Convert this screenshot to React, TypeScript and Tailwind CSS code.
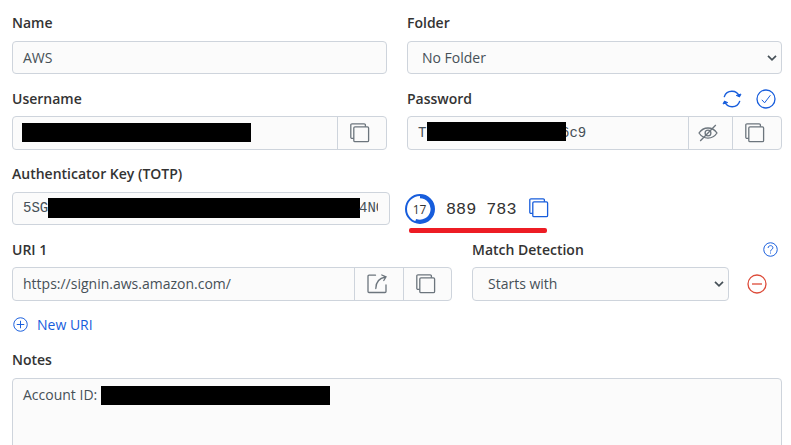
import type { ReactNode } from "react";

const label = "flex h-[21px] items-center text-sm font-semibold text-[#333333]";
const box = "flex rounded-[4px] border border-[#ced4dc] bg-[#fbfbfb] text-sm text-[#465057]";
const mono = "font-['Liberation_Mono',monospace]";

function CopyIcon({ className = "" }: { className?: string }) {
  return (
    <svg width="20" height="20" viewBox="0 0 20 20" fill="none" stroke="currentColor" strokeWidth="1.3" className={`shrink-0 ${className}`}>
      <rect x="3.8" y="3.8" width="14.8" height="14.8" rx="1.2" />
      <path d="M3.8 15.4H2A1.2 1.2 0 0 1 .8 14.2V2A1.2 1.2 0 0 1 2 .8H14.2A1.2 1.2 0 0 1 15.4 2V3.8" />
    </svg>
  );
}

function EyeSlashIcon() {
  return (
    <svg width="20" height="18" viewBox="0 0 20 18" fill="none" stroke="currentColor" strokeWidth="1.3" className="shrink-0">
      <path d="M1 9C5.5 2.3 14.5 2.3 19 9C14.5 15.7 5.5 15.7 1 9Z" />
      <circle cx="10" cy="9" r="2.9" />
      <path d="M2.2 17L17.8 1" />
    </svg>
  );
}

function ShareIcon() {
  return (
    <svg width="20" height="20" viewBox="0 0 20 20" fill="none" stroke="currentColor" strokeWidth="1.3" strokeLinecap="round" className="shrink-0">
      <path d="M8.5 1.2H2A1 1 0 0 0 1 2.2V17.5A1 1 0 0 0 2 18.5H18A1 1 0 0 0 19 17.5V11" />
      <path d="M8.8 14.5C8.8 8.5 12 4.2 18.5 3M14.8 1L19 2.8L16.8 6.5" />
    </svg>
  );
}

function RefreshIcon() {
  return (
    <svg width="20" height="18" viewBox="0 0 20 18" fill="none" stroke="currentColor" strokeWidth="1.3" strokeLinecap="round" className="shrink-0">
      <path d="M2.3 6.7A8 8 0 0 1 17.4 6.5M17.7 11.3A8 8 0 0 1 2.6 11.5" />
      <path d="M14.6 5.6L17.6 6.8L18.8 4.4ZM1.2 13.6L2.4 11.2L5.4 12.4Z" fill="currentColor" strokeWidth="1" strokeLinejoin="round" />
    </svg>
  );
}

function CircleIcon({ size, children }: { size: number; children: ReactNode }) {
  return (
    <svg width={size} height={size} viewBox="0 0 20 20" fill="none" stroke="currentColor" strokeWidth="1.3" className="shrink-0">
      <circle cx="10" cy="10" r="9" />
      {children}
    </svg>
  );
}

function Chevron() {
  return (
    <svg width="10" height="8" viewBox="0 0 10 8" fill="none" stroke="#465057" strokeWidth="1.7" className="shrink-0">
      <path d="M1 1.8L5 5.8L9 1.8" />
    </svg>
  );
}

function Cell({ className, children }: { className: string; children: ReactNode }) {
  return (
    <div className={`flex shrink-0 items-center justify-center border-l border-[#ced4dc] text-[#6c757d] ${className}`}>
      {children}
    </div>
  );
}

export default function App() {
  return (
    <div className="h-[445px] w-[791px] overflow-hidden bg-white pl-3 pr-[9px] pt-3 font-['Open_Sans',sans-serif]">
      <div className="flex gap-5">
        <div className="w-[375px]">
          <div className={label}>Name</div>
          <div className={`${box} mt-2 h-[33px] items-center pl-2.5`}>AWS</div>
        </div>
        <div className="w-[375px]">
          <div className={label}>Folder</div>
          <div className={`${box} mt-2 h-[33px] items-center justify-between pl-3.5 pr-1`}>
            No Folder
            <Chevron />
          </div>
        </div>
      </div>

      <div className="mt-3.5 flex gap-5">
        <div className="w-[375px]">
          <div className={label}>Username</div>
          <div className={`${box} mt-[7px] h-[34px]`}>
            <div className="flex flex-1 items-center pl-[9px]">
              <div className="mb-px h-[19px] w-[229px] bg-black" />
            </div>
            <Cell className="w-[49px] pr-1"><CopyIcon /></Cell>
          </div>
        </div>
        <div className="w-[375px]">
          <div className={`${label} justify-between pr-1.5`}>
            Password
            <div className="flex items-center gap-3.5 text-[#175ddc]">
              <RefreshIcon />
              <CircleIcon size={20}><path d="M5.8 10.8L8.6 13.8L14.4 6.2" strokeWidth="1" /></CircleIcon>
            </div>
          </div>
          <div className={`${box} mt-[7px] h-[34px]`}>
            <div className={`flex flex-1 items-center pl-2.5 ${mono}`}>
              <span className="w-[9px]">T</span>
              <div className="z-10 mb-[3px] h-[19px] w-[139px] bg-black" />
              <span className="-ml-[5px]">6c9</span>
            </div>
            <Cell className="w-11 pr-[5px]"><EyeSlashIcon /></Cell>
            <Cell className="w-[49px] pr-1"><CopyIcon /></Cell>
          </div>
        </div>
      </div>

      <div className="mt-[13px]">
        <div className={label}>Authenticator Key (TOTP)</div>
        <div className="mt-2 flex h-[33px]">
          <div className={`${box} h-[33px] w-[378px] items-center pl-2.5 ${mono}`}>
            <span className="mb-px w-[25px]">5SG</span>
            <div className="mb-px h-5 w-[312px] bg-black" />
            <span className="-ml-px mb-px w-[19px] overflow-hidden">4NG</span>
          </div>
          <div className="ml-[15px] mt-px w-[145px]">
            <div className="flex h-8 items-center">
              <div className="relative flex h-[30px] w-[30px] items-center justify-center pr-px pt-px text-[12px] text-[#333333]">
                <svg width="30" height="30" viewBox="0 0 30 30" fill="none" stroke="#175ddc" className="absolute inset-0">
                  <circle cx="15" cy="15" r="14" strokeWidth="2" />
                  <path d="M15 2.6A12.4 12.4 0 1 1 10.5 26.6" strokeWidth="3.4" />
                </svg>
                17
              </div>
              <span className={`ml-[11px] mt-0.5 w-[83px] whitespace-pre text-[16.8px] text-[#333333] ${mono}`}>889 783</span>
              <CopyIcon className="mb-0.5 text-[#175ddc]" />
            </div>
            <div className="ml-1 mt-[3px] h-[5px] w-[138px] rounded-[2px] bg-[#ed1c24]" />
          </div>
        </div>
      </div>

      <div className="mt-3.5 flex">
        <div className="w-[440px]">
          <div className={label}>URI 1</div>
          <div className={`${box} mt-[7px] h-[34px]`}>
            <div className="flex flex-1 items-center pl-2.5">https://signin.aws.amazon.com/</div>
            <Cell className="w-[49px] pr-[5px]"><ShareIcon /></Cell>
            <Cell className="w-[48px] pr-[3px]"><CopyIcon /></Cell>
          </div>
        </div>
        <div className="ml-5 w-[310px]">
          <div className={`${label} justify-between pr-1`}>
            Match Detection
            <span className="text-[#175ddc]">
              <CircleIcon size={15}>
                <path d="M6.8 8C6.8 3.7 13.3 4 13.2 7.7C13.2 10.2 10 9.8 10 12.6M10 14V15.4" />
              </CircleIcon>
            </span>
          </div>
          <div className="mt-[7px] flex items-center">
            <div className={`${box} h-[34px] w-[257px] items-center justify-between pl-[15px] pr-1`}>
              Starts with
              <Chevron />
            </div>
            <span className="ml-[18px] text-[#dd4b39]">
              <CircleIcon size={20}><path d="M5 10H15" /></CircleIcon>
            </span>
          </div>
        </div>
      </div>

      <div className="mt-[13px] flex h-[21px] items-center gap-[9px] pl-px text-sm text-[#175ddc]">
        <CircleIcon size={15}><path d="M5 10H15M10 5V15" /></CircleIcon>
        New URI
      </div>

      <div className="mt-3.5">
        <div className={label}>Notes</div>
        <div className={`${box} mt-2 h-[100px] items-start pl-2.5 pt-1.5`}>
          <span className="w-[78px] whitespace-nowrap">Account ID:</span>
          <div className="mt-px h-[19px] w-[229px] bg-black" />
        </div>
      </div>
    </div>
  );
}
